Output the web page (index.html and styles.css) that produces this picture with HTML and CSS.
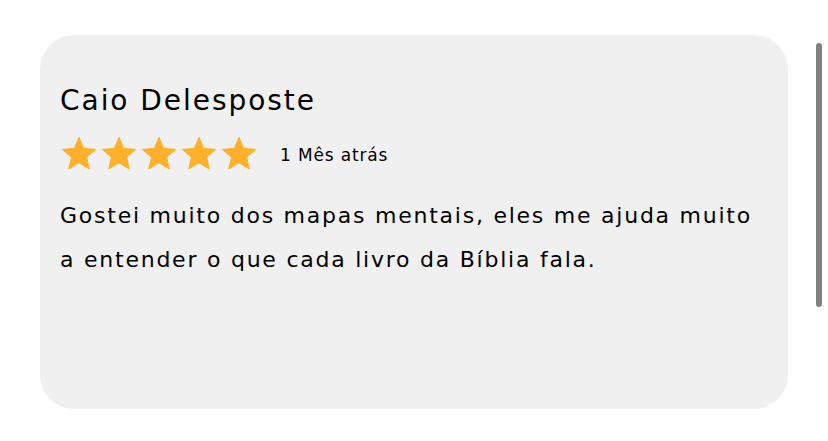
FILE: index.html
```html
<!DOCTYPE html>
<html lang="pt-BR">
<head>
<meta charset="utf-8">
<title>Depoimento</title>
<link rel="stylesheet" href="styles.css">
</head>
<body>
<main class="page">
  <article class="review-card">
    <h2 class="review-name">Caio Delesposte</h2>
    <div class="review-meta">
      <div class="stars" aria-label="5 estrelas">
        <svg class="star" viewBox="0 0 24 24"><path d="M12 17.27L18.18 21l-1.64-7.03L22 9.24l-7.19-.61L12 2 9.19 8.63 2 9.24l5.46 4.73L5.82 21z"/></svg>
        <svg class="star" viewBox="0 0 24 24"><path d="M12 17.27L18.18 21l-1.64-7.03L22 9.24l-7.19-.61L12 2 9.19 8.63 2 9.24l5.46 4.73L5.82 21z"/></svg>
        <svg class="star" viewBox="0 0 24 24"><path d="M12 17.27L18.18 21l-1.64-7.03L22 9.24l-7.19-.61L12 2 9.19 8.63 2 9.24l5.46 4.73L5.82 21z"/></svg>
        <svg class="star" viewBox="0 0 24 24"><path d="M12 17.27L18.18 21l-1.64-7.03L22 9.24l-7.19-.61L12 2 9.19 8.63 2 9.24l5.46 4.73L5.82 21z"/></svg>
        <svg class="star" viewBox="0 0 24 24"><path d="M12 17.27L18.18 21l-1.64-7.03L22 9.24l-7.19-.61L12 2 9.19 8.63 2 9.24l5.46 4.73L5.82 21z"/></svg>
      </div>
      <span class="review-date">1 Mês atrás</span>
    </div>
    <p class="review-text">Gostei muito dos mapas mentais, eles me ajuda muito a entender o que cada livro da Bíblia fala.</p>
  </article>
  <div class="scroll-thumb"></div>
</main>
</body>
</html>
```
FILE: styles.css
```css
html, body {
  margin: 0;
  padding: 0;
  background: #ffffff;
}

body {
  font-family: "DejaVu Sans", "Open Sans", sans-serif;
  color: #000000;
}

.page {
  position: relative;
  width: 828px;
  height: 441px;
  padding: 35px 0 0 40px;
  box-sizing: border-box;
}

.review-card {
  width: 748px;
  height: 374px;
  box-sizing: border-box;
  padding: 46px 20px 0 20px;
  background: #f0f0f0;
  border-radius: 34px;
}

.review-name {
  margin: 0;
  font-size: 28px;
  font-weight: 400;
  line-height: 40px;
  letter-spacing: 0.07em;
}

.review-meta {
  display: flex;
  align-items: center;
  margin: 13px 0 0 -1px;
}

.stars {
  display: flex;
}

.star {
  width: 40px;
  height: 40px;
  display: block;
}

.star path {
  fill: #fdb02c;
  stroke: #fdb02c;
  stroke-width: 0.6;
  stroke-linejoin: round;
}

.review-date {
  margin-left: 21px;
  padding-top: 2px;
  font-size: 17px;
  line-height: 24px;
  letter-spacing: 0.05em;
}

.review-text {
  margin: 20px 0 0 0;
  font-size: 22px;
  line-height: 44px;
  letter-spacing: 0.08em;
}

.scroll-thumb {
  position: absolute;
  left: 816px;
  top: 43px;
  width: 6px;
  height: 264px;
  border-radius: 3px;
  background: #808080;
}
```
